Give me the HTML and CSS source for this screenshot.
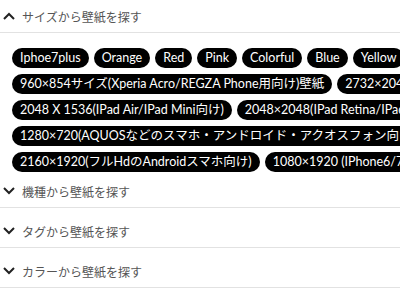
FILE: index.html
```html
<!DOCTYPE html>
<html lang="ja">
<head>
    <meta charset="UTF-8">
    <meta name="viewport" content="width=device-width, initial-scale=1.0">
    <title>壁紙を探す</title>
    <link rel="stylesheet" href="styles.css">
</head>
<body>
    <div class="finder">
        <div class="section open">
            <div class="section-head">
                <svg class="chev" viewBox="0 0 12 8"><path d="M1 7 L6 2 L11 7"/></svg>
                <span>サイズから壁紙を探す</span>
            </div>
            <div class="tags">
                <a class="tag">Iphoe7plus</a>
                <a class="tag">Orange</a>
                <a class="tag">Red</a>
                <a class="tag">Pink</a>
                <a class="tag">Colorful</a>
                <a class="tag">Blue</a>
                <a class="tag">Yellow</a>
                <a class="tag">Green</a>
                <a class="tag">960×854サイズ(Xperia Acro/REGZA Phone用向け)壁紙</a>
                <a class="tag">2732×2048(IPad Pro向け)</a>
                <a class="tag">2048 X 1536(IPad Air/IPad Mini向け)</a>
                <a class="tag">2048×2048(IPad Retina/IPad向け)</a>
                <a class="tag">1280×720(AQUOSなどのスマホ・アンドロイド・アクオスフォン向け)</a>
                <a class="tag">2160×1920(フルHdのAndroidスマホ向け)</a>
                <a class="tag">1080×1920 (IPhone6/7/8向け)</a>
            </div>
        </div>
        <div class="section">
            <div class="section-head">
                <svg class="chev" viewBox="0 0 12 8"><path d="M1 1 L6 6 L11 1"/></svg>
                <span>機種から壁紙を探す</span>
            </div>
        </div>
        <div class="section">
            <div class="section-head">
                <svg class="chev" viewBox="0 0 12 8"><path d="M1 1 L6 6 L11 1"/></svg>
                <span>タグから壁紙を探す</span>
            </div>
        </div>
        <div class="section">
            <div class="section-head">
                <svg class="chev" viewBox="0 0 12 8"><path d="M1 1 L6 6 L11 1"/></svg>
                <span>カラーから壁紙を探す</span>
            </div>
        </div>
    </div>
</body>
</html>
```
FILE: styles.css
```css
body {
    margin: 0;
    background: #fff;
    font-family: "Noto Sans CJK JP", sans-serif;
    overflow: hidden;
}
.finder {
    width: 400px;
}
.section + .section {
    margin-top: 7px;
}
.open + .section {
    margin-top: 0;
}
.section-head {
    height: 32px;
    display: flex;
    align-items: center;
    gap: 7px;
    padding-left: 3px;
    border-bottom: 1px solid #e2e2e2;
    color: #555;
    font-size: 12px;
}
.chev {
    width: 12px;
    height: 8px;
    fill: none;
    stroke: #222;
    stroke-width: 2;
}
.tags {
    width: 520px;
    display: flex;
    flex-wrap: wrap;
    gap: 6px 5px;
    padding: 15px 0 3px 12px;
}
.tag {
    display: block;
    height: 20px;
    line-height: 20px;
    padding: 0 8px;
    border-radius: 10px;
    background: #000;
    color: #fff;
    font-family: Lato, "Noto Sans CJK JP", sans-serif;
    font-size: 12.5px;
    white-space: nowrap;
}
```
